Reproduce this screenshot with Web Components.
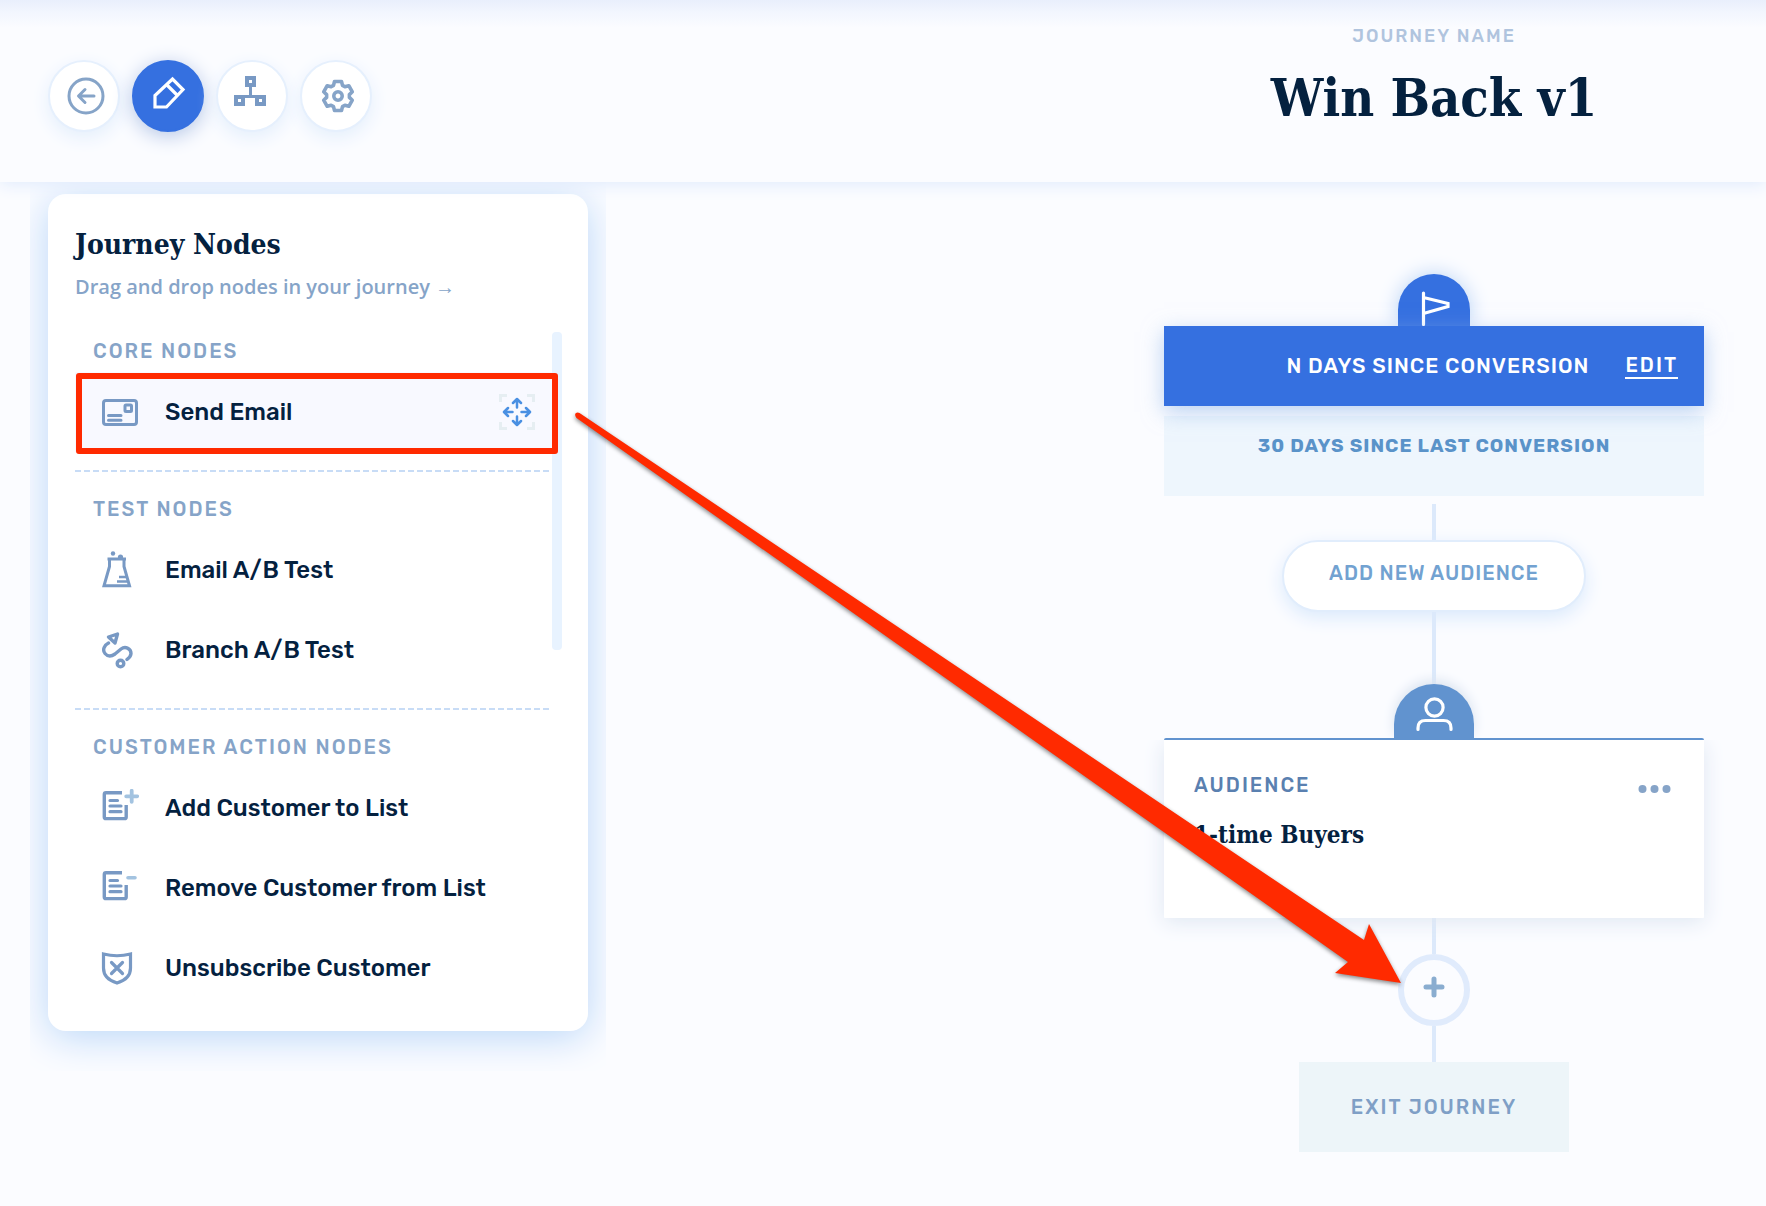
<!DOCTYPE html>
<html lang="en">
<head>
<meta charset="UTF-8">
<meta name="viewport" content="width=device-width, initial-scale=1">
<title>Win Back v1</title>
<style>
    :root {
        --page: #fbfcff;
        --surface: #fff;
        --ink: #04213f;
        --muted: #86a4c8;
        --icon: #7899c4;
        --primary: #3570e0;
        --audience: #6193cf;
        --line: #dce9fb;
        --mark: #ff2a00;
        --font-ui: Rubik, Inter, sans-serif;
        --font-body: "Open Sans", "Noto Sans", sans-serif;
        --font-slab: "Roboto Slab", "DejaVu Serif Condensed", "DejaVu Serif", serif;
    }

    body {
        margin: 0;
        background: var(--page);
        color: var(--ink);
        font-family: var(--font-ui);
    }
</style>
</head>
<body>
<journey-app>
    <journey-toolbar slot="header">
        <tool-button icon="back" label="Back"></tool-button>
        <tool-button icon="edit" label="Edit journey" active></tool-button>
        <tool-button icon="tree" label="Journey map"></tool-button>
        <tool-button icon="gear" label="Settings"></tool-button>
        <span slot="caption">Journey name</span>
        <span slot="title">Win Back v1</span>
    </journey-toolbar>

    <node-panel slot="sidebar">
        <span slot="title">Journey Nodes</span>
        <span slot="hint">Drag and drop nodes in your journey →</span>
        <node-group>
            <span slot="label">Core nodes</span>
            <node-item icon="mail" marked>Send Email</node-item>
        </node-group>
        <node-group>
            <span slot="label">Test nodes</span>
            <node-item icon="flask">Email A/B Test</node-item>
            <node-item icon="branch">Branch A/B Test</node-item>
        </node-group>
        <node-group>
            <span slot="label">Customer action nodes</span>
            <node-item icon="list-add">Add Customer to List</node-item>
            <node-item icon="list-remove">Remove Customer from List</node-item>
            <node-item icon="shield">Unsubscribe Customer</node-item>
        </node-group>
    </node-panel>

    <journey-flow>
        <trigger-card>
            N days since conversion
            <span slot="detail">30 days since last conversion</span>
        </trigger-card>
        <flow-line size="short" gap></flow-line>
        <audience-button>Add new audience</audience-button>
        <flow-line size="long"></flow-line>
        <audience-card>
            <span slot="kind">Audience</span>
            1-time Buyers
        </audience-card>
        <flow-line size="short"></flow-line>
        <add-step></add-step>
        <flow-line size="short"></flow-line>
        <exit-card>Exit journey</exit-card>
    </journey-flow>

    <drag-arrow slot="overlay"></drag-arrow>
</journey-app>

<script>
/** Inline SVG bodies, keyed by icon name: [width, height, markup] */
const ICONS = {
    back: [42, 38, `
        <g stroke-width="3" transform="translate(4 0)">
            <circle cx="19" cy="19" r="17"/>
            <path d="M27 19H12M18 12.500L11.500 19l6.500 6.500" stroke-linecap="round" stroke-linejoin="round"/>
        </g>`],
    edit: [36, 36, `
        <g stroke-width="3.200" transform="translate(2 0)">
            <path d="M3 32V20.500L20.500 4 31 14.500 14.500 32z"/>
            <path d="M15 10l10 10"/>
        </g>`],
    tree: [38, 36, `
        <g stroke-width="4">
            <path d="M14 3h7v7h-7zM3 22h7v7H3zM24 22h7v7h-7z"/>
            <path d="M17.500 12v9M8 21.500h18" stroke-width="3"/>
        </g>`],
    gear: [40, 36, `
        <g stroke-width="3.600" stroke-linejoin="round" transform="translate(22 18)">
            <path d="M-4.500-10.600L-3.500-14.500h7l1 3.900L6.900-9.200l3.900-1.100 3.500 6.100L11.400-1.400V1.400L14.300 4.200l-3.500 6.100L6.900 9.200 4.500 10.600l-1 3.900h-7l-1-3.900L-6.900 9.200l-3.900 1.100-3.500-6.100L-11.400 1.400V-1.400L-14.300-4.200l3.500-6.100L-6.900-9.200z"/>
            <circle r="4.200"/>
        </g>`],
    mail: [38, 38, `
        <g stroke-width="3">
            <rect x="2.500" y="7.500" width="33" height="24" rx="2.500"/>
            <rect x="24" y="12" width="6.500" height="6.500" rx="1"/>
            <path d="M7.500 22.500h12.500M7.500 27.200h12.500" stroke-linecap="round"/>
        </g>`],
    flask: [38, 38, `
        <g stroke-width="3">
            <path d="M6.500 8h18.500M8.500 8v7.500L3 34.800h25.500L23 15.500V8"/>
            <path d="M18 26h7M16 30.500h10" stroke-width="2.400"/>
        </g>
        <g fill="currentColor" stroke="none"><circle cx="12" cy="2.500" r="2.200"/><circle cx="19.500" cy="6" r="2.600"/></g>`],
    branch: [38, 38, `
        <g stroke-width="3.400">
            <path d="M7.500 6L16.500 3l-2.500 9z" stroke-linejoin="round"/>
            <path d="M7.500 12c-4 2-6.500 7-3.500 10.500 3 3.500 6.500 3 10 .5l6-5c4-3 10-1 10 4.500 0 2.500-1.500 4-4 6" stroke-linecap="round"/>
            <circle cx="19.500" cy="32.500" r="3.300"/>
        </g>`],
    "list-add": [38, 38, `
        <path d="M21 3.700H5q-1.700 0-1.700 1.700v22.500q0 1.700 1.700 1.700h18.500q1.700 0 1.700-1.700V16" stroke-width="3.400"/>
        <path d="M9 11.500h7.500M9 17h11M9 22.700h11" stroke-width="3.200" stroke-linecap="round"/>
        <path d="M30.700 1.800v11M25.200 7.300h11" stroke="#a3c3e0" stroke-width="3.800" stroke-linecap="round"/>`],
    "list-remove": [38, 38, `
        <path d="M21 3.700H5q-1.700 0-1.700 1.700v22.500q0 1.700 1.700 1.700h18.500q1.700 0 1.700-1.700V16" stroke-width="3.400"/>
        <path d="M9 11.500h7.500M9 17h11M9 22.700h11" stroke-width="3.200" stroke-linecap="round"/>
        <path d="M27 8.700h7" stroke="#a3c3e0" stroke-width="3.600" stroke-linecap="round"/>`],
    shield: [38, 38, `
        <path d="M2.500 5q13.500 3.500 27 0v14q0 11-13.500 15Q2.500 30 2.500 19z" stroke-width="3.200"/>
        <path d="M10.500 13.500l11 11M21.500 13.500l-11 11" stroke-width="3.200" stroke-linecap="round"/>`],
    move: [38, 38, `
        <path d="M2.500 9V2.500H9M29 2.500h6.500V9M35.500 29v6.500H29M9 35.500H2.500V29" stroke="#e6eef2" stroke-width="3"/>
        <g stroke-width="2.500" stroke-linecap="round" stroke-linejoin="round">
            <path d="M19 14.500V6.500M15 10l4-4 4 4M19 23.500v8M15 28l4 4 4-4M14.500 19h-8M10 15l-4 4 4 4M23.500 19h8M28 15l4 4-4 4"/>
        </g>`],
    flag: [34, 36, `
        <path d="M6.500 3v31.500M6.500 7.500L31 13.500v3L6.500 23.500" stroke-width="3.200" stroke-linecap="round"/>`],
    user: [38, 42, `
        <g stroke-width="3.200">
            <circle cx="19.500" cy="17.500" r="8.600"/>
            <path d="M3 39.500v-1.500q0-7.500 7.500-7.500h18q7.500 0 7.500 7.500v1.500" stroke-linecap="round"/>
        </g>`],
    plus: [22, 22, `
        <path d="M11 3v16M3 11h16" stroke-width="5" stroke-linecap="round"/>`],
    dots: [36, 10, `
        <g fill="currentColor" stroke="none"><circle cx="4.500" cy="5" r="4"/><circle cx="16.500" cy="5" r="4"/><circle cx="28.500" cy="5" r="4"/></g>`]
};

const icon = (name) => {
    const [width, height, body] = ICONS[name];
    return `<svg width="${width}" height="${height}" viewBox="0 0 ${width} ${height}" fill="none" stroke="currentColor" aria-hidden="true">${body}</svg>`;
};

/** Reset shared by every shadow root */
const BASE = `
    * { box-sizing: border-box; }
    svg { display: block; flex: none; }
    h1, h2, h3, p { margin: 0; }
    button { padding: 0; border: 0; background: none; font: inherit; color: inherit; cursor: pointer; }
`;

class JourneyElement extends HTMLElement {
    constructor() {
        super();
        this.attachShadow({ mode: 'open' });
    }

    connectedCallback() {
        this.shadowRoot.innerHTML = `<style>${BASE}${this.styles()}</style>${this.render()}`;
    }
}

/** Page frame: header, sidebar, canvas */
class JourneyApp extends JourneyElement {
    styles() {
        return `
            :host { display: block; position: relative; min-height: 100vh; }
            main {
                display: grid;
                grid-template-columns: 540px 540px;
                justify-content: space-between;
                align-items: start;
                padding: 12px 62px 48px 48px;
            }
        `;
    }

    render() {
        return `
            <slot name="header"></slot>
            <main><slot name="sidebar"></slot><slot></slot></main>
            <slot name="overlay"></slot>
        `;
    }
}

/** Top bar with round tool buttons and the journey title */
class JourneyToolbar extends JourneyElement {
    styles() {
        return `
            :host {
                display: block;
                position: relative;
                z-index: 1;
                background: linear-gradient(#e9effc, #f2f6fe 12px, var(--page) 28px);
                box-shadow: 0 2px 16px #dfeafc;
            }
            header {
                display: flex;
                justify-content: space-between;
                height: 182px;
                padding: 22px 62px 0 48px;
            }
            nav { display: flex; gap: 12px; padding-top: 38px; }
            .name { width: 540px; text-align: center; }
            p {
                color: #b0c4de;
                font-size: 18px;
                font-weight: 500;
                line-height: 28px;
                letter-spacing: 2px;
                text-transform: uppercase;
            }
            h1 { margin-top: 12px; font: bold 52px/72px var(--font-slab); }
        `;
    }

    render() {
        return `
            <header>
                <nav aria-label="Journey tools"><slot></slot></nav>
                <div class="name">
                    <p><slot name="caption"></slot></p>
                    <h1><slot name="title"></slot></h1>
                </div>
            </header>
        `;
    }
}

class ToolButton extends JourneyElement {
    styles() {
        return `
            :host { display: block; }
            button {
                display: grid;
                place-items: center;
                width: 72px;
                height: 72px;
                border: 2px solid #e6f0fd;
                border-radius: 50%;
                background: var(--surface);
                color: var(--muted);
                box-shadow: 0 6px 18px #e4effc;
            }
            :host([active]) button {
                border-color: var(--primary);
                background: var(--primary);
                color: #fff;
                box-shadow: 0 4px 20px #b4c6e6;
            }
            :host([icon="tree"]) button { color: var(--icon); }
            :host([icon="tree"]) button, :host([icon="edit"]) button { padding-bottom: 6px; }
        `;
    }

    render() {
        return `<button type="button" aria-label="${this.getAttribute('label')}">${icon(this.getAttribute('icon'))}</button>`;
    }
}

/** Sidebar card listing the draggable nodes */
class NodePanel extends JourneyElement {
    styles() {
        return `
            :host {
                display: block;
                border-radius: 18px;
                padding: 33px 26px 23px 27px;
                background: var(--surface);
                box-shadow: 0 6px 40px #b9d6f8;
                clip-path: inset(-12px -18px -40px -18px);
            }
            h2 { font: bold 28px/36px var(--font-slab); }
            p {
                margin-top: 8px;
                color: var(--muted);
                font: 600 20px/32px var(--font-body);
            }
            .list { display: flex; margin-top: 11px; }
            .groups { flex: 1; min-width: 0; }
            .track {
                flex: none;
                width: 10px;
                height: 318px;
                margin-top: 18px;
                border-radius: 4px;
                background: #e8f3ff;
            }
        `;
    }

    render() {
        return `
            <h2><slot name="title"></slot></h2>
            <p><slot name="hint"></slot></p>
            <div class="list">
                <div class="groups"><slot></slot></div>
                <div class="track"></div>
            </div>
        `;
    }
}

class NodeGroup extends JourneyElement {
    styles() {
        return `
            :host { display: block; }
            :host(:not(:last-of-type)) {
                padding-bottom: 20px;
                background: repeating-linear-gradient(90deg, #c8dcf6 0 6px, transparent 6px 9px) bottom / 100% 2px no-repeat;
            }
            h3 {
                padding: 24px 18px 8px;
                color: var(--muted);
                font-size: 20px;
                font-weight: 500;
                line-height: 26px;
                letter-spacing: 2px;
                text-transform: uppercase;
            }
        `;
    }

    render() {
        return `<h3><slot name="label"></slot></h3><slot></slot>`;
    }
}

class NodeItem extends JourneyElement {
    styles() {
        return `
            :host { display: block; position: relative; }
            button {
                display: flex;
                align-items: center;
                gap: 26px;
                width: 100%;
                height: 80px;
                padding: 0 16px 0 26px;
                color: var(--icon);
                text-align: left;
                cursor: grab;
            }
            .name {
                flex: 1;
                color: var(--ink);
                font-size: 24px;
                font-weight: 500;
                line-height: 32px;
                white-space: nowrap;
            }
            .grip { color: #4a90e2; }
            :host([marked]) button { background: #f8f9ff; }
            /* outline that runs over the scroll track */
            :host([marked])::after {
                content: "";
                position: absolute;
                inset: 1px -6px -2px 1px;
                border: 6px solid var(--mark);
                border-radius: 3px;
                pointer-events: none;
            }
        `;
    }

    render() {
        const grip = this.hasAttribute('marked') ? `<span class="grip">${icon('move')}</span>` : '';
        return `
            <button type="button" draggable="true">
                ${icon(this.getAttribute('icon'))}
                <span class="name"><slot></slot></span>
                ${grip}
            </button>
        `;
    }
}

/** Vertical run of journey steps */
class JourneyFlow extends JourneyElement {
    styles() {
        return `
            :host {
                display: flex;
                flex-direction: column;
                align-items: center;
                padding-top: 80px;
            }
        `;
    }

    render() {
        return `<slot></slot>`;
    }
}

class FlowLine extends JourneyElement {
    styles() {
        return `
            :host { display: block; width: 4px; height: 36px; background: var(--line); }
            :host([size="long"]) { height: 72px; }
            :host([gap]) { margin-top: 8px; }
        `;
    }

    render() {
        return '';
    }
}

class TriggerCard extends JourneyElement {
    styles() {
        return `
            :host { display: flex; flex-direction: column; align-items: center; width: 100%; }
            .tab {
                display: grid;
                justify-items: center;
                align-items: end;
                width: 72px;
                height: 52px;
                border-radius: 36px 36px 0 0;
                background: var(--primary);
                color: #fff;
                box-shadow: 0 0 20px #b9d3f5;
            }
            .bar {
                display: flex;
                align-items: center;
                justify-content: flex-end;
                gap: 36px;
                position: relative;
                width: 100%;
                height: 80px;
                padding-right: 26px;
                background: var(--primary);
                color: #fff;
                font-size: 20px;
                font-weight: 500;
                line-height: 24px;
                text-transform: uppercase;
                box-shadow: 0 6px 20px #8fb5e999;
            }
            .title { font-size: 21px; letter-spacing: 1px; }
            a {
                border-bottom: 2px solid;
                color: inherit;
                text-decoration: none;
                letter-spacing: 2px;
            }
            .detail {
                width: 100%;
                height: 80px;
                margin-top: 10px;
                padding-top: 16px;
                background: #eef6fd;
                color: #5a93c9;
                font-size: 19px;
                font-weight: 700;
                line-height: 28px;
                letter-spacing: 1px;
                text-align: center;
                text-transform: uppercase;
            }
        `;
    }

    render() {
        return `
            <div class="tab">${icon('flag')}</div>
            <div class="bar"><span class="title"><slot></slot></span><a href="#edit">Edit</a></div>
            <div class="detail"><slot name="detail"></slot></div>
        `;
    }
}

class AudienceButton extends JourneyElement {
    styles() {
        return `
            :host { display: block; }
            button {
                width: 304px;
                height: 72px;
                padding-bottom: 6px;
                border: 2px solid #e1edfc;
                border-radius: 36px;
                background: var(--surface);
                color: #72a2d1;
                font-size: 20px;
                font-weight: 500;
                line-height: 28px;
                letter-spacing: 1px;
                text-transform: uppercase;
                box-shadow: 0 6px 18px #dbeafc;
            }
        `;
    }

    render() {
        return `<button type="button"><slot></slot></button>`;
    }
}

class AudienceCard extends JourneyElement {
    styles() {
        return `
            :host { display: flex; flex-direction: column; align-items: center; width: 100%; }
            .tab {
                display: grid;
                place-items: center;
                position: relative;
                z-index: 1;
                width: 80px;
                height: 54px;
                border-radius: 40px 40px 0 0;
                background: var(--audience);
                color: #fff;
                box-shadow: 0 -4px 12px #dbe4f0;
            }
            article {
                position: relative;
                z-index: 1;
                width: 100%;
                min-height: 180px;
                padding: 31px 30px;
                border-top: 2px solid var(--audience);
                border-radius: 2px;
                background: var(--surface);
            }
            /* card shadow sits below the tab */
            article::before {
                content: "";
                position: absolute;
                inset: 0;
                box-shadow: 0 4px 20px #dfe7f2;
                clip-path: inset(0 -30px -30px -30px);
            }
            header { display: flex; align-items: center; justify-content: space-between; }
            .kind {
                color: #5a80b0;
                font-size: 20px;
                font-weight: 500;
                line-height: 28px;
                letter-spacing: 2px;
                text-transform: uppercase;
            }
            header button { padding-top: 8px; color: var(--muted); }
            h2 { margin-top: 20px; font: bold 24px/32px var(--font-slab); }
        `;
    }

    render() {
        return `
            <div class="tab">${icon('user')}</div>
            <article>
                <header>
                    <span class="kind"><slot name="kind"></slot></span>
                    <button type="button" aria-label="More options">${icon('dots')}</button>
                </header>
                <h2><slot></slot></h2>
            </article>
        `;
    }
}

class AddStep extends JourneyElement {
    styles() {
        return `
            :host { display: block; }
            button {
                display: grid;
                place-items: center;
                width: 72px;
                height: 72px;
                padding-bottom: 6px;
                border: 6px solid #e0ebfc;
                border-radius: 50%;
                color: #8aadd0;
            }
        `;
    }

    render() {
        return `<button type="button" aria-label="Add step">${icon('plus')}</button>`;
    }
}

class ExitCard extends JourneyElement {
    styles() {
        return `
            :host {
                display: grid;
                place-items: center;
                width: 270px;
                height: 90px;
                background: #edf5f9;
                color: #7f9fc6;
                font-size: 20px;
                font-weight: 500;
                line-height: 28px;
                letter-spacing: 2px;
                text-transform: uppercase;
            }
        `;
    }

    render() {
        return `<span><slot></slot></span>`;
    }
}

/** Red guide from the dragged node to its drop point */
class DragArrow extends JourneyElement {
    styles() {
        return `
            :host {
                position: absolute;
                z-index: 2;
                top: 400px;
                left: 570px;
                right: 350px;
                pointer-events: none;
            }
            svg { width: 100%; height: auto; overflow: visible; filter: drop-shadow(0 2px 2px #0007); }
        `;
    }

    render() {
        return `
            <svg viewBox="0 0 846 600" aria-hidden="true">
                <path fill="var(--mark)" d="M9.500 13L794 540l5-16 32 59-66-10 13-11L6.500 18Q4 14.500 6 13 7.500 12 9.500 13z"/>
            </svg>
        `;
    }
}

customElements.define('journey-app', JourneyApp);
customElements.define('journey-toolbar', JourneyToolbar);
customElements.define('tool-button', ToolButton);
customElements.define('node-panel', NodePanel);
customElements.define('node-group', NodeGroup);
customElements.define('node-item', NodeItem);
customElements.define('journey-flow', JourneyFlow);
customElements.define('flow-line', FlowLine);
customElements.define('trigger-card', TriggerCard);
customElements.define('audience-button', AudienceButton);
customElements.define('audience-card', AudienceCard);
customElements.define('add-step', AddStep);
customElements.define('exit-card', ExitCard);
customElements.define('drag-arrow', DragArrow);
</script>
</body>
</html>
